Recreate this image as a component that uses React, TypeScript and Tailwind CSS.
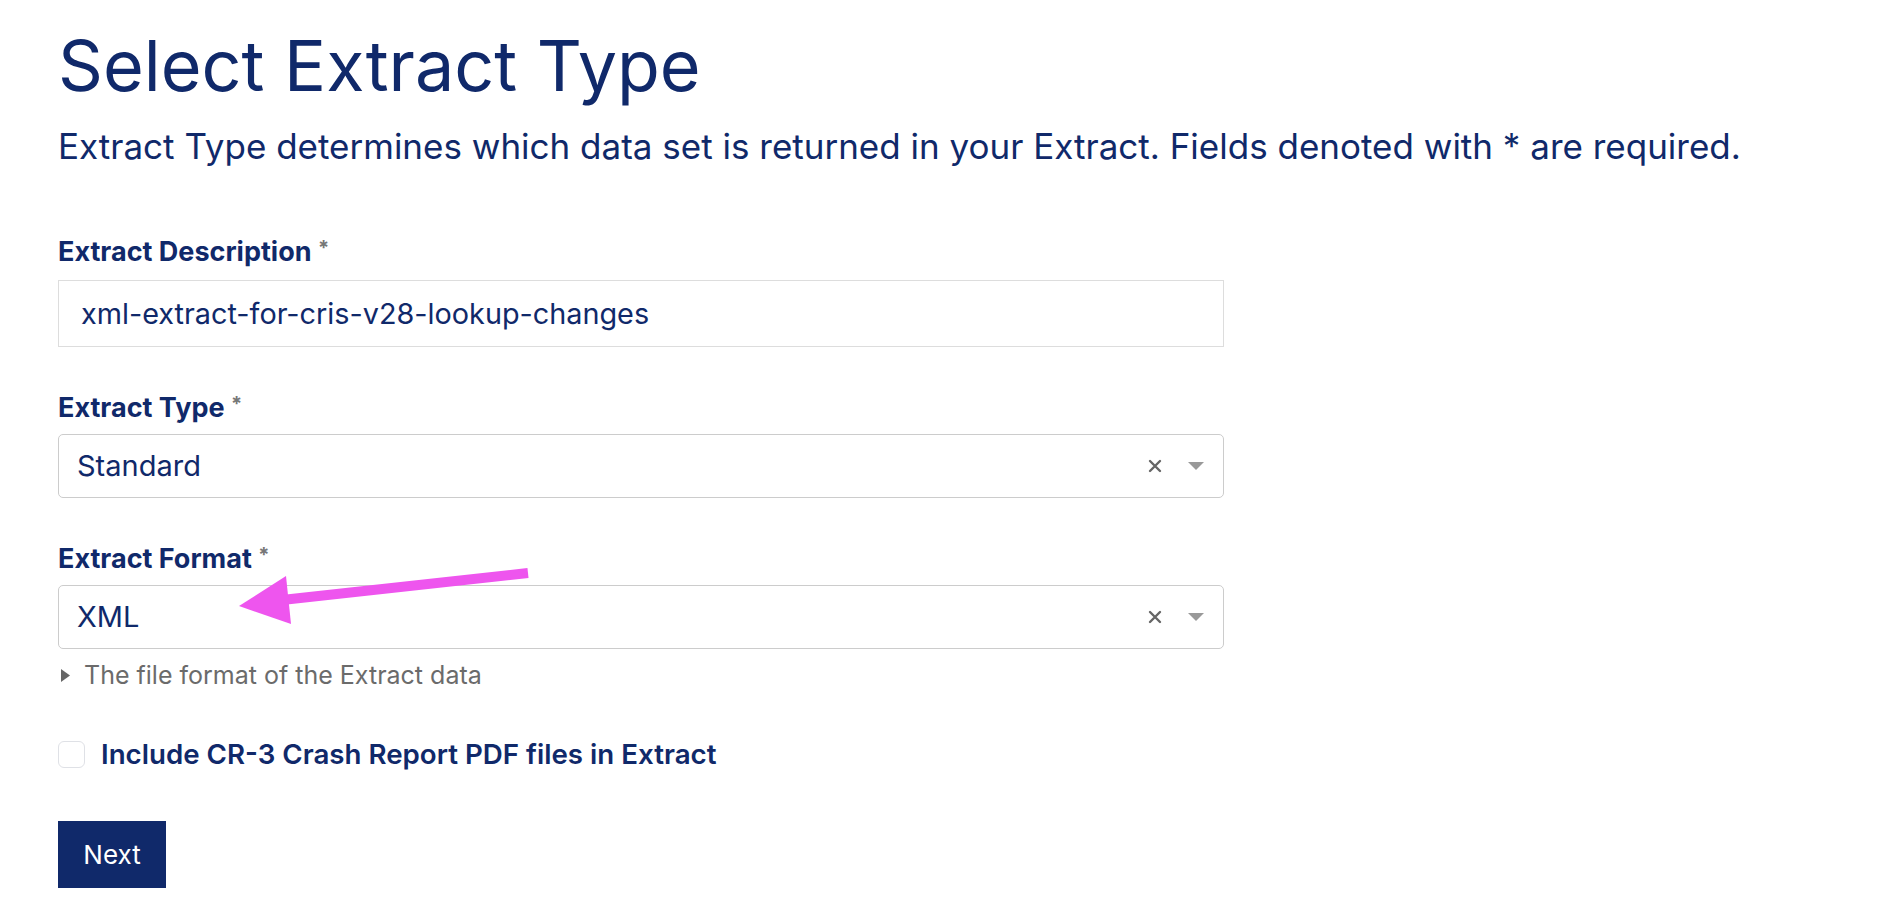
const navy = "text-[#10296a]";

function ClearIcon() {
  return (
    <svg width="14" height="14" viewBox="0 0 14 14" className="shrink-0">
      <path d="M2 2 L12 12 M12 2 L2 12" stroke="#666666" strokeWidth="2.4" strokeLinecap="round" />
    </svg>
  );
}

function CaretIcon() {
  return (
    <svg width="16" height="8" viewBox="0 0 16 8" className="shrink-0">
      <polygon points="0,0 16,0 8,8" fill="#999999" />
    </svg>
  );
}

function SelectBox({ value }: { value: string }) {
  return (
    <div className="flex h-[64px] w-[1166px] items-center rounded-[5px] border border-[#cccccc] bg-white pl-[18px] pr-[19px]">
      <span className={`flex-1 font-['Inter'] text-[29px] ${navy}`}>{value}</span>
      <ClearIcon />
      <div className="w-[26px]" />
      <CaretIcon />
    </div>
  );
}

function Label({ text }: { text: string }) {
  return (
    <div className={`font-['Inter'] text-[27px] leading-none font-bold ${navy}`}>
      {text} <span className="align-top text-[20px] text-[#777777]">*</span>
    </div>
  );
}

export default function App() {
  return (
    <main className="relative h-[918px] w-[1888px] overflow-hidden bg-white pl-[58px]">
      <h1 className={`pt-[31px] font-['Inter'] text-[70px] leading-none font-normal ${navy}`}>
        Select Extract Type
      </h1>
      <p className={`mt-[28px] font-['Inter'] text-[35px] leading-none ${navy}`}>
        Extract Type determines which data set is returned in your Extract. Fields denoted with * are required.
      </p>

      <div className="mt-[74px]">
        <Label text="Extract Description" />
        <div className="mt-[15px] flex h-[67px] w-[1166px] items-center border border-[#dddddd] bg-white pl-[22px]">
          <span className={`font-['Inter'] text-[28.8px] ${navy}`}>xml-extract-for-cris-v28-lookup-changes</span>
        </div>
      </div>

      <div className="mt-[47px]">
        <Label text="Extract Type" />
        <div className="mt-[13px]">
          <SelectBox value="Standard" />
        </div>
      </div>

      <div className="mt-[47px]">
        <Label text="Extract Format" />
        <div className="mt-[13px]">
          <SelectBox value="XML" />
        </div>
        <div className="mt-[14px] flex items-center gap-[14px] pl-[3px] font-['Inter'] text-[25px] leading-none text-[#6b6b6b]">
          <svg width="9" height="13" viewBox="0 0 9 13">
            <polygon points="0,0 9,6.5 0,13" fill="#666666" />
          </svg>
          <span>The file format of the Extract data</span>
        </div>
      </div>

      <label className="mt-[53px] flex items-center gap-[16px]">
        <span className="h-[27px] w-[27px] rounded-[6px] border border-[#dfe1e6] bg-white" />
        <span className={`font-['Inter'] text-[27.7px] leading-none font-semibold ${navy}`}>
          Include CR-3 Crash Report PDF files in Extract
        </span>
      </label>

      <button className="mt-[52px] flex h-[67px] w-[108px] items-center justify-center bg-[#10296a] font-['Inter'] text-[26px] text-white">
        Next
      </button>

      <svg className="pointer-events-none absolute top-0 left-0" width="1888" height="918" viewBox="0 0 1888 918">
        <line x1="528" y1="573" x2="282" y2="600" stroke="#ee55ee" strokeWidth="10" />
        <polygon points="239,606 286,576 291,624" fill="#ee55ee" />
      </svg>
    </main>
  );
}
